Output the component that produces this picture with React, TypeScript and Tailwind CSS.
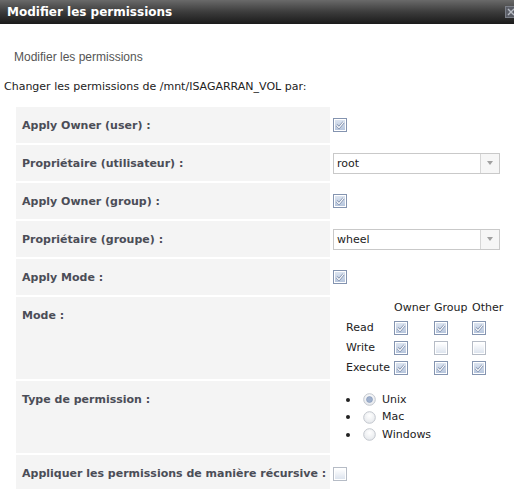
const dv = "font-['DejaVu_Sans',Verdana,sans-serif]"

function Check({ on = true }: { on?: boolean }) {
  return (
    <svg width="14" height="14" viewBox="0 0 14 14" className="block">
      <defs>
        <linearGradient id={on ? "cbOn" : "cbOff"} x1="0" y1="0" x2="0" y2="1">
          <stop offset="0" stopColor={on ? "#dce4f0" : "#ffffff"} />
          <stop offset="1" stopColor={on ? "#b7c6dd" : "#dde4ee"} />
        </linearGradient>
      </defs>
      <rect x="0.5" y="0.5" width="13" height="13" fill="#fff" stroke={on ? "#8494b0" : "#b6bcc6"} />
      <rect x="2" y="2" width="10" height="10" fill={`url(#${on ? "cbOn" : "cbOff"})`} />
      {on && (
        <>
          <path d="M3.5 7.2 L6 9.6 L10.6 4.2" fill="none" stroke="#6f80a2" strokeWidth="2.4" />
          <path d="M3.5 7.2 L6 9.6 L10.6 4.2" fill="none" stroke="#ffffff" strokeWidth="1.2" />
        </>
      )}
    </svg>
  )
}

function Radio({ on = false }: { on?: boolean }) {
  return (
    <svg width="13" height="13" viewBox="0 0 13 13" className="block">
      <defs>
        <radialGradient id={on ? "rOn" : "rOff"} cx="0.5" cy="0.35" r="0.7">
          <stop offset="0" stopColor="#ffffff" />
          <stop offset="1" stopColor="#e3e6ea" />
        </radialGradient>
      </defs>
      <circle cx="6.5" cy="6.5" r="5.8" fill={`url(#${on ? "rOn" : "rOff"})`} stroke="#c3c7ce" />
      {on && <circle cx="6.5" cy="6.5" r="3" fill="#9fb0cc" stroke="#7f93b6" strokeWidth="0.6" />}
    </svg>
  )
}

function Select({ value }: { value: string }) {
  return (
    <div className="flex h-[21px] w-[167px] border border-[#c9c9c9] bg-white">
      <div className={`flex-1 pl-[3px] text-[11px] leading-[19px] text-[#222] ${dv}`}>{value}</div>
      <div className="flex w-[19px] items-center justify-center border-l border-[#d6d6d6] bg-[#f6f6f6]">
        <div className="h-0 w-0 border-x-[3.5px] border-t-[4px] border-x-transparent border-t-[#a0a0a0]" />
      </div>
    </div>
  )
}

function Label({ text }: { text: string }) {
  return (
    <div className={`bg-[#f4f4f4] pl-[6px] pt-[12px] pb-[11px] text-[11px] font-bold leading-[13px] text-[#4b4d57] ${dv}`}>
      {text}
    </div>
  )
}

export default function App() {
  return (
    <div className="h-[489px] w-[514px] overflow-hidden bg-white">
      {/* barre de titre */}
      <div className="relative flex h-[24px] items-center bg-gradient-to-b from-[#6a6a6a] via-[#3c3c3c] to-[#1b1b1b] pl-[7px]">
        <span className={`text-[12px] font-bold text-white ${dv}`}>Modifier les permissions</span>
        <svg width="12" height="12" viewBox="0 0 12 12" className="absolute left-[505px] top-[6px]">
          <rect x="0.5" y="0.5" width="11" height="11" fill="#5a5d66" stroke="#7b7f88" />
          <path d="M3 3 L9 9 M9 3 L3 9" stroke="#b8bcc4" strokeWidth="1.4" />
        </svg>
      </div>

      <div className="pl-[14px] pt-[26px] text-[12px] leading-[14px] text-[#555] font-['Liberation_Sans',Arial,sans-serif]">
        Modifier les permissions
      </div>
      <div className={`pl-[4px] pt-[16px] text-[11px] leading-[13px] text-[#222] ${dv}`}>
        Changer les permissions de /mnt/ISAGARRAN_VOL par:
      </div>

      <div className="ml-[16px] mt-[14px] grid grid-cols-[314px_1fr] gap-[2px]">
        <Label text="Apply Owner (user) :" />
        <div className="flex items-center pl-[1px]">
          <Check />
        </div>

        <Label text="Propriétaire (utilisateur) :" />
        <div className="flex items-center pl-[1px]">
          <Select value="root" />
        </div>

        <Label text="Apply Owner (group) :" />
        <div className="flex items-center pl-[1px]">
          <Check />
        </div>

        <Label text="Propriétaire (groupe) :" />
        <div className="flex items-center pl-[1px]">
          <Select value="wheel" />
        </div>

        <Label text="Apply Mode :" />
        <div className="flex items-center pl-[1px]">
          <Check />
        </div>

        <Label text="Mode :" />
        <div className={`pt-[1px] pb-[1px] pl-[14px] text-[11px] text-[#222] ${dv}`}>
          <div className="grid grid-cols-[48px_40px_38px_40px] grid-rows-[20px_20px_20px_20px] items-center">
            <div />
            <div>Owner</div>
            <div>Group</div>
            <div>Other</div>

            <div>Read</div>
            <Check />
            <Check />
            <Check />

            <div>Write</div>
            <Check />
            <Check on={false} />
            <Check on={false} />

            <div>Execute</div>
            <Check />
            <Check />
            <Check />
          </div>
        </div>

        <Label text="Type de permission :" />
        <div className={`pt-[10px] pb-[9px] text-[11px] text-[#222] ${dv}`}>
          {[
            { t: "Unix", on: true },
            { t: "Mac", on: false },
            { t: "Windows", on: false },
          ].map((r) => (
            <div key={r.t} className="flex h-[17.5px] items-center">
              <span className="ml-[14px] h-[4px] w-[4px] rounded-full bg-[#222]" />
              <span className="ml-[13px]">
                <Radio on={r.on} />
              </span>
              <span className="ml-[6px]">{r.t}</span>
            </div>
          ))}
        </div>

        <Label text="Appliquer les permissions de manière récursive :" />
        <div className="flex items-center pl-[1px] pt-[2px]">
          <Check on={false} />
        </div>
      </div>
    </div>
  )
}
